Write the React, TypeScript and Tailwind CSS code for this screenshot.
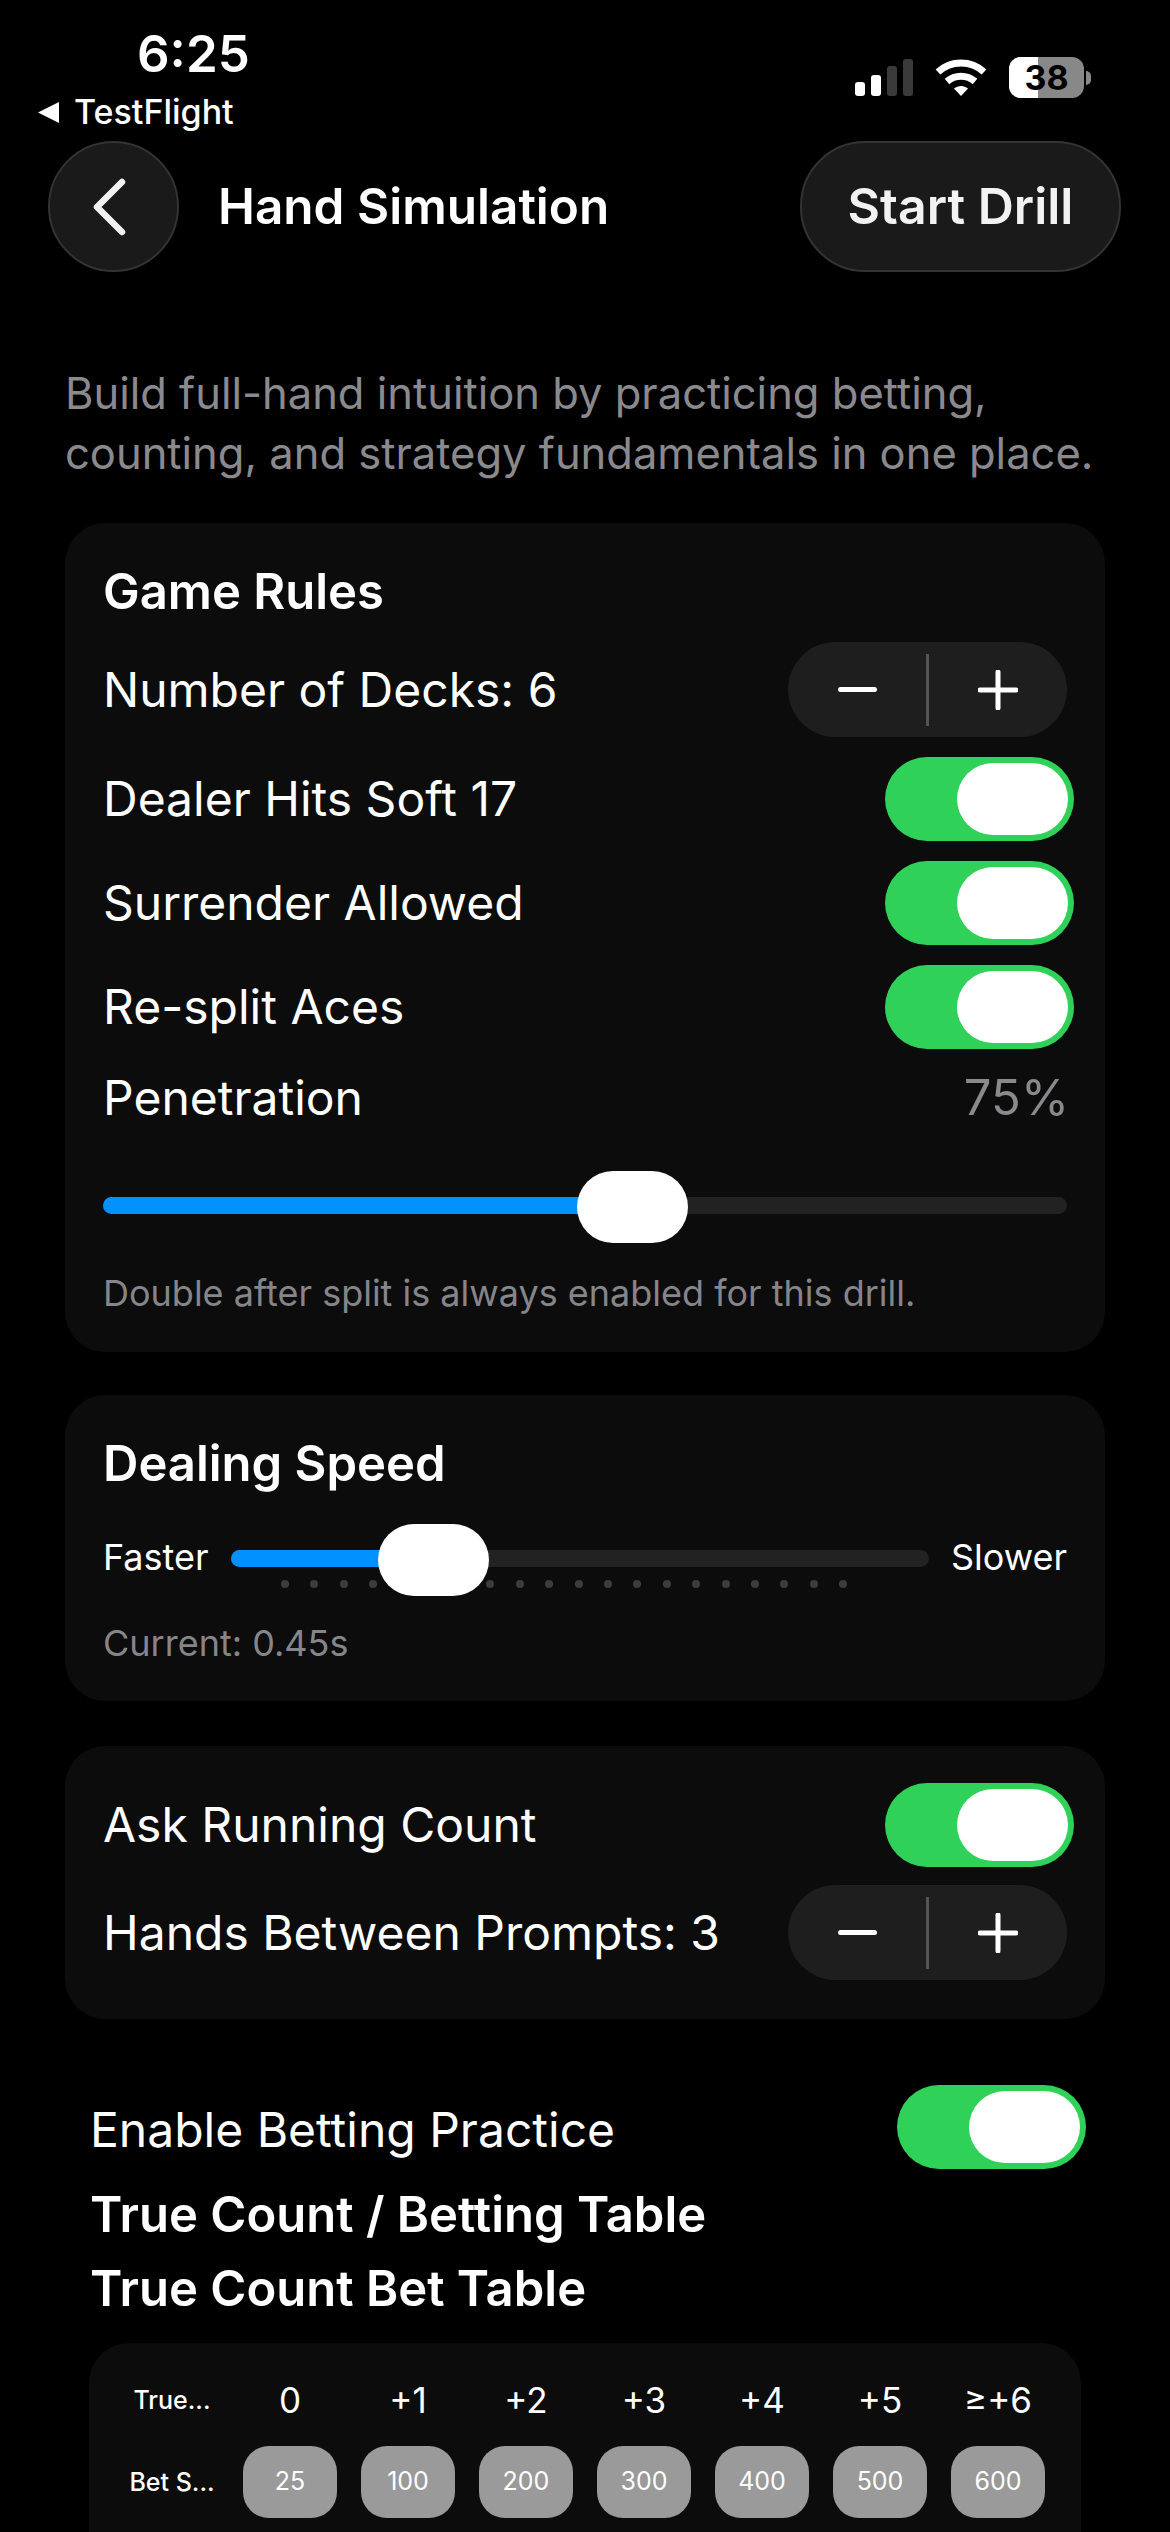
const dotKeys = Array.from({ length: 20 }, (_, i) => i);
const betColumns = [
  { count: "0", bet: "25" },
  { count: "+1", bet: "100" },
  { count: "+2", bet: "200" },
  { count: "+3", bet: "300" },
  { count: "+4", bet: "400" },
  { count: "+5", bet: "500" },
  { count: "≥+6", bet: "600" },
];

function Toggle() {
  return (
    <div className="flex h-[84px] w-[189px] shrink-0 items-center justify-end rounded-full bg-[#30d158] pr-[6px]">
      <div className="h-[72px] w-[111px] rounded-full bg-white" />
    </div>
  );
}

function Stepper() {
  return (
    <div className="flex h-[95px] w-[279px] shrink-0 items-center rounded-full bg-[#1e1e1e]">
      <div className="flex flex-1 justify-center">
        <div className="h-[5px] w-[39px] rounded-full bg-white" />
      </div>
      <div className="h-[72px] w-[3px] bg-[#555555]" />
      <div className="flex flex-1 justify-center">
        <svg width="40" height="40" viewBox="0 0 40 40">
          <path d="M2 20H38M20 2V38" stroke="white" strokeWidth="5" strokeLinecap="round" />
        </svg>
      </div>
    </div>
  );
}

function Row({ label, children }: { label: string; children: React.ReactNode }) {
  return (
    <div className="flex items-center justify-between">
      <span className="text-[48px] leading-[60px] text-white">{label}</span>
      {children}
    </div>
  );
}

function SignalBars() {
  return (
    <div className="flex h-[37px] items-end gap-[6px]">
      <div className="h-[14px] w-[10px] rounded-[3px] bg-white" />
      <div className="h-[21px] w-[10px] rounded-[3px] bg-white" />
      <div className="h-[30px] w-[10px] rounded-[3px] bg-[#3a3a3a]" />
      <div className="h-[37px] w-[10px] rounded-[3px] bg-[#3a3a3a]" />
    </div>
  );
}

function Battery() {
  return (
    <div className="flex items-center gap-[2px]">
      <div className="relative h-[41px] w-[75px] overflow-hidden rounded-[12px] bg-[#888888]">
        <div className="h-full w-[29px] bg-white" />
        <span className="absolute inset-0 text-center text-[34px] font-bold leading-[41px] text-black">38</span>
      </div>
      <div className="h-[14px] w-[5px] rounded-r-full bg-[#888888]" />
    </div>
  );
}

export default function App() {
  return (
    <div className="h-[2532px] w-[1170px] overflow-hidden bg-black font-['Inter',sans-serif]">
      <div className="flex h-[141px] items-start justify-between pr-[79px]">
        <div className="pl-[37px] pt-[28px]">
          <div className="pl-[100px] text-[51px] font-semibold leading-[52px] text-white">6:25</div>
          <div className="mt-[16px] flex h-[32px] items-center gap-[14px]">
            <svg width="23" height="23" viewBox="0 0 23 23">
              <path d="M22 1V22L1 11.5Z" fill="white" />
            </svg>
            <span className="text-[34px] font-medium leading-[32px] text-white">TestFlight</span>
          </div>
        </div>
        <div className="mt-[57px] flex items-center gap-[22px]">
          <SignalBars />
          <svg width="52" height="38" viewBox="0 0 52 38">
            <path d="M3 13C16 1 36 1 49 13" fill="none" stroke="white" strokeWidth="7" />
            <path d="M12 22.5C20 15.5 32 15.5 40 22.5" fill="none" stroke="white" strokeWidth="7" />
            <path d="M19 29.5C23 26 29 26 33 29.5L26 37Z" fill="white" />
          </svg>
          <Battery />
        </div>
      </div>

      <div className="flex h-[131px] items-center justify-between pl-[48px] pr-[49px]">
        <div className="flex items-center gap-[39px]">
          <button className="flex h-[131px] w-[131px] items-center justify-center rounded-full border-2 border-[#333333] bg-[#1a1a1a] pr-[8px]">
            <svg width="34" height="60" viewBox="0 0 34 60">
              <path d="M29 5L4 30L29 55" fill="none" stroke="#f2f2f2" strokeWidth="6.5" strokeLinecap="round" strokeLinejoin="round" />
            </svg>
          </button>
          <span className="text-[49.5px] font-semibold text-white">Hand Simulation</span>
        </div>
        <button className="flex h-[131px] w-[321px] items-center justify-center rounded-[65px] border-2 border-[#333333] bg-[#1a1a1a] text-[50px] font-semibold text-[#f2f2f2]">
          Start Drill
        </button>
      </div>

      <p className="mt-[91px] pl-[65px] text-[43.5px] leading-[60px] text-[#8a8a8e]">
        Build full-hand intuition by practicing betting,
        <br />
        counting, and strategy fundamentals in one place.
      </p>

      <div className="mx-[65px] mt-[40px] rounded-[40px] bg-[#0c0c0c] pb-[39px] pl-[38px] pr-[38px] pt-[44px]">
        <h2 className="text-[49px] font-semibold leading-[50px] text-white">Game Rules</h2>
        <div className="mt-[25px] flex flex-col gap-[20px]">
          <Row label="Number of Decks: 6">
            <Stepper />
          </Row>
          <div className="-mr-[7px]">
            <Row label="Dealer Hits Soft 17">
              <Toggle />
            </Row>
          </div>
          <div className="-mr-[7px]">
            <Row label="Surrender Allowed">
              <Toggle />
            </Row>
          </div>
          <div className="-mr-[7px]">
            <Row label="Re-split Aces">
              <Toggle />
            </Row>
          </div>
        </div>
        <div className="mt-[19px] flex items-center justify-between">
          <span className="text-[48px] leading-[60px] text-white">Penetration</span>
          <span className="-mr-[2px] text-[49px] leading-[60px] text-[#8a8a8e]">75%</span>
        </div>
        <div className="relative mt-[43px] flex h-[72px] items-center">
          <div className="-mt-[3px] h-[17px] w-full rounded-full bg-[#222222]">
            <div className="h-full w-[490px] rounded-l-full bg-[#0091ff]" />
          </div>
          <div className="absolute left-[474px] top-0 h-[72px] w-[111px] rounded-full bg-white" />
        </div>
        <p className="mt-[30px] text-[36px] leading-[40px] text-[#85858a]">
          Double after split is always enabled for this drill.
        </p>
      </div>

      <div className="mx-[65px] mt-[43px] rounded-[40px] bg-[#0c0c0c] pb-[38px] pl-[38px] pr-[38px] pt-[44px]">
        <h2 className="text-[49px] font-semibold leading-[50px] text-white">Dealing Speed</h2>
        <div className="mt-[35px] flex h-[72px] items-center justify-between">
          <span className="pb-[6px] text-[36px] text-white">Faster</span>
          <div className="relative flex h-[72px] w-[698px] items-center">
            <div className="-mt-[3px] h-[17px] w-full rounded-full bg-[#222222]">
              <div className="h-full w-[150px] rounded-l-full bg-[#0091ff]" />
            </div>
            <div className="absolute left-[50px] top-[56px] flex gap-[21.4px]">
              {dotKeys.map((d) => (
                <div key={d} className="h-[8px] w-[8px] rounded-full bg-[#3c3c3c]" />
              ))}
            </div>
            <div className="absolute left-[147px] top-0 h-[72px] w-[111px] rounded-full bg-white" />
          </div>
          <span className="pb-[6px] text-[36px] text-white">Slower</span>
        </div>
        <p className="mt-[27px] text-[36px] leading-[40px] text-[#85858a]">Current: 0.45s</p>
      </div>

      <div className="mx-[65px] mt-[45px] rounded-[40px] bg-[#0c0c0c] pb-[39px] pl-[38px] pr-[38px] pt-[37px]">
        <div className="-mr-[7px]">
          <Row label="Ask Running Count">
            <Toggle />
          </Row>
        </div>
        <div className="mt-[18px]">
          <Row label="Hands Between Prompts: 3">
            <Stepper />
          </Row>
        </div>
      </div>

      <div className="pl-[90px] pr-[84px] pt-[66px]">
        <div className="flex items-center justify-between">
          <span className="mt-[5px] text-[48px] leading-[60px] text-white">Enable Betting Practice</span>
          <Toggle />
        </div>
        <h2 className="mt-[21px] text-[49px] font-semibold leading-[50px] text-white">True Count / Betting Table</h2>
        <h2 className="mt-[24px] text-[49px] font-semibold leading-[50px] text-white">True Count Bet Table</h2>
      </div>

      <div className="ml-[89px] mt-[29px] h-[300px] w-[992px] rounded-[40px] bg-[#0c0c0c] pl-[36px] pr-[36px] pt-[38px]">
        <div className="grid grid-cols-[94px_repeat(7,94px)] gap-x-[24px] gap-y-[27px]">
          <div className="text-center text-[25px] font-medium leading-[38px] text-white">True...</div>
          {betColumns.map((c) => (
            <div key={c.count} className="text-center text-[35px] leading-[38px] text-white">
              {c.count}
            </div>
          ))}
          <div className="text-center text-[25px] font-medium leading-[72px] text-white">Bet S...</div>
          {betColumns.map((c) => (
            <div key={c.bet} className="flex h-[72px] items-center justify-center rounded-[26px] bg-[#9a9a9a] text-[25px] text-white">
              {c.bet}
            </div>
          ))}
        </div>
      </div>
    </div>
  );
}
